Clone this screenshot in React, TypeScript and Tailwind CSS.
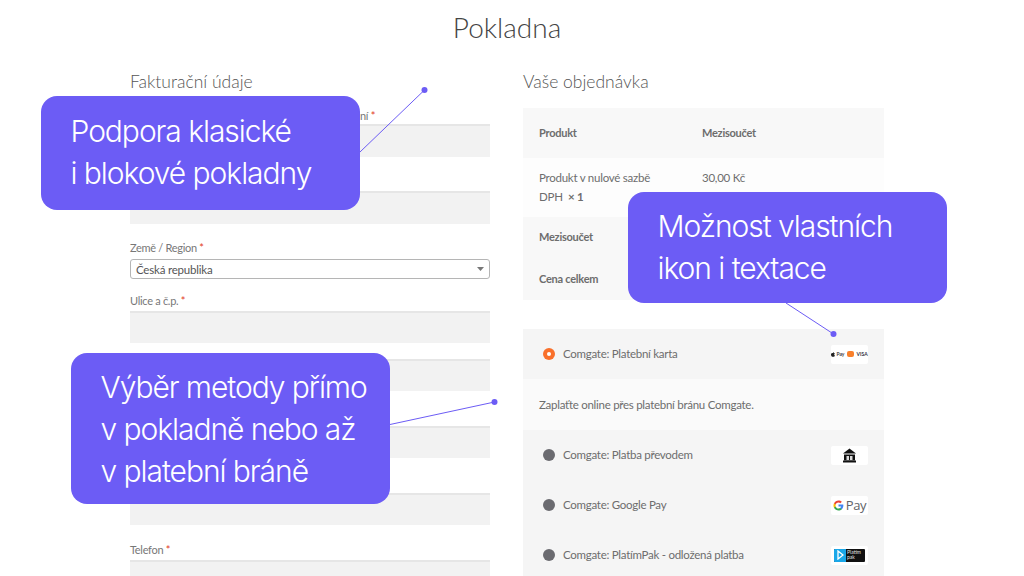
const body = "font-['Lato',sans-serif]";

function Req() {
  return <span className="text-[#e2401c]"> *</span>;
}

function Label({ className, children }: { className: string; children: React.ReactNode }) {
  return <div className={`h-[10px] text-[11px] leading-[10px] tracking-[-0.3px] text-[#777] ${className}`}>{children}<Req /></div>;
}

function Input({ className }: { className: string }) {
  return <div className={`border-t-2 border-[#e6e6e6] bg-[#f2f2f2] ${className}`} />;
}

function Left() {
  return (
    <div className="w-[360px]">
      <h3 className="h-[50px] pt-[6px] font-['Lato',sans-serif] text-[17.500px] font-light leading-[24px] text-[#555]">Fakturační údaje</h3>
      <Label className="mt-[-3px] pl-[230px]">ní</Label>
      <div className="mt-[-4px]">
        <Input className="mt-[7px] h-[33px]" />
        <Input className="mt-[34px] h-[33px]" />
      </div>
      <Label className="mt-[19px]">Země / Region</Label>
      <div className="relative mt-[6px] flex h-[20px] items-center rounded-[3px] border border-[#b5b5b5] bg-white pl-[5px] pt-[1px] text-[11.500px] tracking-[-0.2px] text-[#555]">
        Česká republika
        <svg className="absolute right-[5px] top-[7px]" width="7" height="4" viewBox="0 0 7 4"><path d="M0 0h7L3.500 4z" fill="#777" /></svg>
      </div>
      <Label className="mt-[17px]">Ulice a č.p.</Label>
      <Input className="mt-[5px] h-[32px]" />
      <Input className="mt-[16px] h-[32px]" />
      <Input className="mt-[35px] h-[32px]" />
      <Input className="mt-[35px] h-[32px]" />
      <Label className="mt-[20px]">Telefon</Label>
      <Input className="mt-[5px] h-[32px]" />
    </div>
  );
}

function Right() {
  return (
    <div className="w-[361px]">
      <h3 className="h-[44px] pt-[6px] font-['Lato',sans-serif] text-[17.500px] font-light leading-[24px] text-[#555]">Vaše objednávka</h3>
      <div className="text-[11.500px] tracking-[-0.25px] text-[#6d6d6d]">
        <div className="flex h-[50px] items-center bg-[#f8f8f8] pl-[16px] text-[11px] font-bold">
          <span className="w-[163px]">Produkt</span><span>Mezisoučet</span>
        </div>
        <div className="flex h-[59px] bg-[#fdfdfd] pl-[16px] pt-[10px] leading-[19px]">
          <span className="w-[163px]">Produkt v nulové sazbě<br />DPH <span className="font-bold">&nbsp;× 1</span></span>
          <span>30,00 Kč</span>
        </div>
        <div className="h-[83px] bg-[#f8f8f8] pl-[16px] text-[11px] font-bold">
          <div className="flex h-[41px] items-center">Mezisoučet</div>
          <div className="flex h-[42px] items-center">Cena celkem</div>
        </div>
      </div>
      <div className="mt-[29px] text-[11.500px] tracking-[-0.27px] text-[#6d6d6d]">
        <Pay label="Comgate: Platební karta" active><CardIcon /></Pay>
        <div className="flex h-[51px] items-center bg-[#fafafa] pl-[16px]">Zaplaťte online přes platební bránu Comgate.</div>
        <Pay label="Comgate: Platba převodem"><BankIcon /></Pay>
        <Pay label="Comgate: Google Pay"><GPayIcon /></Pay>
        <Pay label="Comgate: PlatímPak - odložená platba"><PakIcon /></Pay>
      </div>
    </div>
  );
}

function Pay({ label, active, children }: { label: string; active?: boolean; children: React.ReactNode }) {
  return (
    <div className="flex h-[50px] items-center bg-[#f5f5f5] pl-[20px] pr-[16px]">
      {active ? (
        <span className="flex h-[12px] w-[12px] items-center justify-center rounded-full bg-[#f9702b]">
          <span className="h-[4px] w-[4px] rounded-full bg-white" />
        </span>
      ) : (
        <span className="h-[12px] w-[12px] rounded-full bg-[#6b6b70]" />
      )}
      <span className="ml-[8px] flex-1">{label}</span>
      <span className="flex h-[19px] w-[37px] items-center justify-center rounded-[2px] bg-white">{children}</span>
    </div>
  );
}

function CardIcon() {
  return (
    <span className="flex items-center gap-[1px] text-[5px] font-bold leading-none tracking-normal text-[#444]">
      <svg width="4" height="5" viewBox="0 0 4 5"><path d="M2 1.200C2.500.9 3.500.9 3.800 1.500 3 2 3 3.200 4 3.600 3.600 4.500 3 5 2.500 4.800 2.200 4.700 1.800 4.700 1.500 4.800 .6 5 0 3.500 0 2.600 0 1.300 1.300.8 2 1.200zM2 1C2 .5 2.400.1 2.900 0 3 .6 2.500 1 2 1z" fill="#222" /></svg>
      <span className="mr-[1px]">Pay</span>
      <span className="h-[6px] w-[7px] rounded-[2px] bg-[#f9802b]" />
      <span className="ml-[2px] text-[#334]">VISA</span>
    </span>
  );
}

function BankIcon() {
  return (
    <svg width="15" height="15" viewBox="0 0 15 15">
      <path d="M7.500 0.500 14 5.500H1z" fill="#111" />
      <path d="M2 6.500h11v6H2z" fill="#111" />
      <path d="M4.500 8h6v4h-6z" fill="#ddd" />
      <path d="M7 8h1v4H7z" fill="#111" />
      <path d="M1 12.500h13V14.500H1z" fill="#111" />
    </svg>
  );
}

function GPayIcon() {
  return (
    <span className="flex items-center gap-[2px]">
      <svg width="11" height="11" viewBox="0 0 24 24">
        <path d="M22.600 12.200c0-.8-.1-1.500-.2-2.200H12v4.200h5.900c-.3 1.400-1 2.500-2.200 3.300v2.700h3.500c2.100-1.900 3.400-4.700 3.400-8z" fill="#4285f4" />
        <path d="M12 23c3 0 5.400-1 7.200-2.700l-3.500-2.700c-1 .7-2.200 1-3.700 1-2.900 0-5.300-1.900-6.200-4.500H2.200v2.800C4 20.500 7.700 23 12 23z" fill="#34a853" />
        <path d="M5.800 14.100c-.5-1.400-.5-2.800 0-4.200V7.100H2.200c-1.500 3-1.500 6.800 0 9.800z" fill="#fbbc05" />
        <path d="M12 5.400c1.600 0 3 .6 4.200 1.600l3.100-3.100C17.400 2.100 14.900 1 12 1 7.700 1 4 3.500 2.200 7.100l3.600 2.800C6.700 7.300 9.100 5.400 12 5.400z" fill="#ea4335" />
      </svg>
      <span className="font-['Open_Sans',sans-serif] text-[13px] leading-none tracking-[-0.3px] text-[#5f6368]">Pay</span>
    </span>
  );
}

function PakIcon() {
  return (
    <span className="flex h-[13px] w-[31px] overflow-hidden rounded-[1px] bg-[#111]">
      <span className="flex h-full w-[12px] items-center justify-center bg-[#1aa7e8]">
        <svg width="7" height="10" viewBox="0 0 7 10"><path d="M1 1l5 4-5 4z" fill="none" stroke="#fff" strokeWidth="1.300" /></svg>
      </span>
      <span className="pl-[1px] pt-[1px] text-[5px] font-medium leading-[5.500px] tracking-normal text-[#ddd]">Platím<br />pak</span>
    </span>
  );
}

function Callout({ className, lines }: { className: string; lines: string[] }) {
  return (
    <div className={`absolute w-[319px] rounded-[16px] bg-[#6c5cf5] pl-[29.500px] font-['Inter',sans-serif] text-[30px] font-light leading-[42px] tracking-[-1.05px] text-white ${className}`}>
      {lines.map((l) => <div key={l}>{l}</div>)}
    </div>
  );
}

export default function App() {
  return (
    <div className={`relative h-[576px] w-[1024px] overflow-hidden bg-white ${body}`}>
      <div className="ml-[130px] w-[754px]">
        <h1 className="h-[64px] pt-[9px] text-center font-['Lato',sans-serif] text-[28px] font-light leading-[36px] text-[#444]">Pokladna</h1>
        <div className="flex gap-[33px]">
          <Left />
          <Right />
        </div>
      </div>
      <svg className="pointer-events-none absolute left-0 top-0" width="1024" height="576" viewBox="0 0 1024 576">
        <g stroke="#6c5cf5" strokeWidth="1" fill="none">
          <path d="M424.500 90 360 152" />
          <path d="M786 303 833.500 334" />
          <path d="M390 424.500 494.500 402" />
        </g>
        <g fill="#6c5cf5">
          <circle cx="424.500" cy="90" r="3" />
          <circle cx="833.500" cy="334" r="3" />
          <circle cx="494.500" cy="402" r="3" />
        </g>
      </svg>
      <Callout className="left-[41px] top-[96px] h-[114px] pt-[14px]" lines={["Podpora klasické", "i blokové pokladny"]} />
      <Callout className="left-[628px] top-[192px] h-[111px] pt-[13px]" lines={["Možnost vlastních", "ikon i textace"]} />
      <Callout className="left-[71px] top-[353px] h-[151px] pt-[13px]" lines={["Výběr metody přímo", "v pokladně nebo až", "v platební bráně"]} />
    </div>
  );
}
